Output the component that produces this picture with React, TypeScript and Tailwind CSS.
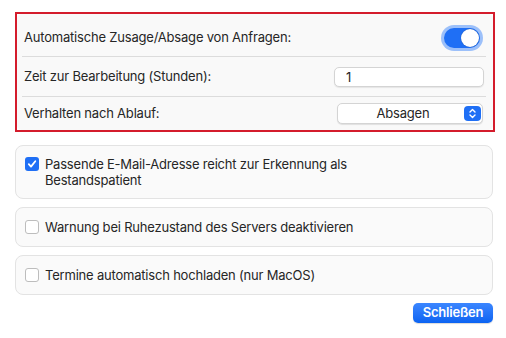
import { useState, type JSX } from "react";

const font = { fontFamily: "Inter, 'Noto Sans', sans-serif" };

const Toggle = ({ on, onClick }: { on: boolean; onClick: () => void }): JSX.Element => {
    return (
        <button onClick={onClick} className="rounded-full p-[3px] bg-[#9cc0fa] mr-[3px]">
            <div className={`w-[36px] h-[20px] rounded-full flex items-center px-[1px] ${on ? "bg-[#1f6ff5] justify-end" : "bg-[#d9d9d9] justify-start"}`}>
                <div className="w-[18px] h-[18px] rounded-full bg-white shadow-[0_0_1px_rgba(0,0,0,0.4)]"></div>
            </div>
        </button>
    );
};

const CheckBox = ({ checked }: { checked: boolean }): JSX.Element => {
    if (checked) {
        return (
            <div className="w-[14px] h-[14px] rounded-[3px] bg-[#1f6ff5] flex items-center justify-center shrink-0">
                <svg width="10" height="10" viewBox="0 0 10 10">
                    <path d="M1.8 5.2 L4 7.6 L8.3 2.2" fill="none" stroke="white" strokeWidth="1.8" strokeLinecap="round" strokeLinejoin="round" />
                </svg>
            </div>
        );
    }
    return <div className="w-[14px] h-[14px] rounded-[3px] bg-white border border-[#bdbdbd] shrink-0"></div>;
};

export default function App(): JSX.Element {
    const [auto, setAuto] = useState(true);
    const [hours, setHours] = useState("1");

    const options = [
        ["Passende E-Mail-Adresse reicht zur Erkennung als Bestandspatient", true],
        ["Warnung bei Ruhezustand des Servers deaktivieren", false],
        ["Termine automatisch hochladen (nur MacOS)", false],
    ] as const;

    return (
        <div style={font} className="w-[506px] h-[338px] bg-white text-[13px] tracking-[-0.2px] text-[#262626] pl-[15px] pr-[11px] pt-[12px] overflow-hidden">
            {/* red frame marks the request section */}
            <div className="border-2 border-[#d41c2c] h-[120px]">
                <div className="bg-[#f9f9f9] rounded-[5px] pl-[5px] pr-[7px] h-full">
                    <div className="h-[43px] pt-[5px] flex items-center justify-between border-b border-[#dcdcdc] pl-[2px]">
                        <span>Automatische Zusage/Absage von Anfragen:</span>
                        <Toggle on={auto} onClick={() => setAuto(!auto)} />
                    </div>
                    <div className="h-[40px] flex items-center justify-between border-b border-[#dcdcdc] pl-[2px]">
                        <span>Zeit zur Bearbeitung (Stunden):</span>
                        <input value={hours} onChange={(e) => setHours(e.target.value)} className="w-[150px] h-[20px] mr-[2px] rounded-[5px] bg-white border border-[#d4d4d4] shadow-[0_1px_1px_rgba(0,0,0,0.08)] px-[11px] text-[13px] text-[#262626] outline-none" />
                    </div>
                    <div className="h-[33px] flex items-center justify-between pl-[2px]">
                        <span>Verhalten nach Ablauf:</span>
                        <div className="w-[146px] h-[21px] mr-[3px] rounded-[5px] bg-white border border-[#d4d4d4] shadow-[0_1px_1px_rgba(0,0,0,0.1)] flex items-center pr-[1px]">
                            <span className="flex-1 text-center pl-[4px]">Absagen</span>
                            <div className="w-[17px] h-[15px] rounded-[4px] bg-[#1f6ff5] flex items-center justify-center">
                                <svg width="9" height="11" viewBox="0 0 9 11">
                                    <path d="M2 4 L4.5 1.6 L7 4 M2 7 L4.5 9.4 L7 7" fill="none" stroke="white" strokeWidth="1.4" strokeLinecap="round" strokeLinejoin="round" />
                                </svg>
                            </div>
                        </div>
                    </div>
                </div>
            </div>

            <div className="flex flex-col gap-[8px] mt-[13px] mr-[2px]">
                {options.map(([label, checked]) => (
                    <div key={label} className={`bg-[#fafafa] border border-[#e3e3e3] rounded-[8px] flex items-start pl-[9px] pr-[20px] ${label.length > 60 ? "py-[10px]" : "py-[11px]"}`}>
                        <div className="pt-[1px]">
                            <CheckBox checked={checked} />
                        </div>
                        <span className="ml-[6px] leading-[16px] max-w-[330px]">{label}</span>
                    </div>
                ))}
            </div>

            <div className="flex justify-end mt-[8px] mr-[2px]">
                <button className="w-[80px] h-[20px] rounded-[5px] bg-gradient-to-b from-[#3b86ff] to-[#0a63f2] text-white font-semibold text-[13px] shadow-[0_1px_1px_rgba(0,0,0,0.15)]">Schließen</button>
            </div>
        </div>
    );
}
